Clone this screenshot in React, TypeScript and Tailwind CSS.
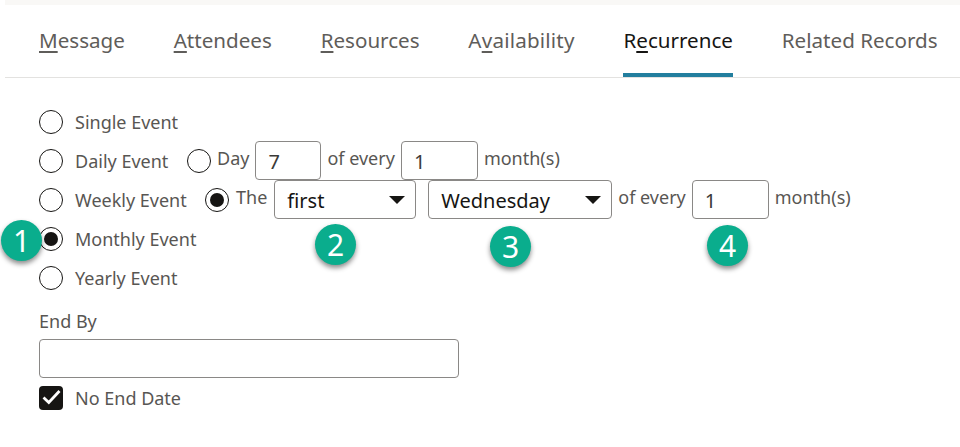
const tabs = [
    { before: '', key: 'M', after: 'essage' },
    { before: '', key: 'A', after: 'ttendees' },
    { before: '', key: 'R', after: 'esources' },
    { before: 'A', key: 'v', after: 'ailability', wide: true },
    { before: 'R', key: 'e', after: 'currence', active: true },
    { before: 'Re', key: 'l', after: 'ated Records' },
];

const Radio = ({ checked = false }: { checked?: boolean }) => (
    <span className="w-6 h-6 mt-px shrink-0 rounded-full border border-[#161513] bg-white flex items-center justify-center">
        {checked && <span className="w-[14px] h-[14px] rounded-full bg-[#161513]" />}
    </span>
);

const Label = ({ children }: { children: string }) => (
    <span className="text-[18px] leading-6 text-[#585653] whitespace-nowrap pb-[6px]">{children}</span>
);

const RowLabel = ({ children, className = '' }: { children: string; className?: string }) => (
    <span className={`mt-[2px] text-[18px] text-[#585653] whitespace-nowrap ${className}`}>{children}</span>
);

const Box = ({ value, className }: { value: string; className: string }) => (
    <input
        readOnly
        value={value}
        className={`h-[39px] shrink-0 border border-[#8a8886] rounded-[4px] bg-white pl-3 pt-[2px] text-[20px] text-[#3b3a38] outline-none ${className}`}
    />
);

const Select = ({ value, className }: { value: string; className: string }) => (
    <div className={`h-[39px] shrink-0 border border-[#8a8886] rounded-[4px] bg-white pl-3 pr-[10px] flex items-center justify-between text-[20px] text-[#161513] ${className}`}>
        <span className="pt-[2px]">{value}</span>
        <span className="w-0 h-0 border-x-[8px] border-x-transparent border-t-[8px] border-t-[#161513]" />
    </div>
);

const Badge = ({ n, className }: { n: number; className: string }) => (
    <span className={`absolute w-[41px] h-[41px] rounded-full bg-[#0aad8d] text-white text-[30px] flex items-center justify-center shadow-[0_3px_5px_rgba(0,0,0,0.45)] ${className}`}>
        {n}
    </span>
);

const App = () => {
    return (
        <div className="relative w-[960px] h-[447px] overflow-hidden bg-white font-['Noto_Sans',sans-serif]">
            <div className="ml-[5px] h-[5px] bg-[#f9f8f6]" />
            <div className="ml-[5px] h-[73px] pl-[34px] border-b border-[#e3e2e0] flex gap-[48.8px]">
                {tabs.map((t) => (
                    <div
                        key={t.key + t.after}
                        className={`h-[72px] pt-[19px] text-[20.6px] leading-8 whitespace-nowrap ${t.wide ? 'tracking-[0.2px]' : ''} ${t.active ? 'text-[#161513] border-b-4 border-[#227e9e]' : 'text-[#5f5d5a]'}`}
                    >
                        {t.before}
                        <span className="underline decoration-2 underline-offset-[3px]">{t.key}</span>
                        {t.after}
                    </div>
                ))}
            </div>

            <div className="pl-[39px] pt-[24px]">
                <div className="h-[39px] flex items-center gap-3">
                    <Radio />
                    <RowLabel>Single Event</RowLabel>
                </div>
                <div className="h-[39px] flex items-center">
                    <Radio />
                    <RowLabel className="ml-3 w-[112px]">Daily Event</RowLabel>
                    <Radio />
                    <span className="ml-[6px] mr-[6px] flex"><Label>Day</Label></span>
                    <Box value="7" className="w-[66px]" />
                    <span className="mx-[6px] flex"><Label>of every</Label></span>
                    <Box value="1" className="w-[77px]" />
                    <span className="ml-[6px] flex"><Label>month(s)</Label></span>
                </div>
                <div className="h-[39px] flex items-center">
                    <Radio />
                    <RowLabel className="ml-3 w-[130px]">Weekly Event</RowLabel>
                    <Radio checked />
                    <span className="ml-[7px] mr-[7px] flex"><Label>The</Label></span>
                    <Select value="first" className="w-[142px]" />
                    <Select value="Wednesday" className="w-[184px] ml-3" />
                    <span className="mx-[6px] flex"><Label>of every</Label></span>
                    <Box value="1" className="w-[77px]" />
                    <span className="ml-[6px] flex"><Label>month(s)</Label></span>
                </div>
                <div className="h-[39px] flex items-center gap-3">
                    <Radio checked />
                    <RowLabel>Monthly Event</RowLabel>
                </div>
                <div className="h-[39px] flex items-center gap-3">
                    <Radio />
                    <RowLabel>Yearly Event</RowLabel>
                </div>

                <div className="mt-3 mb-[6px] text-[18px] leading-6 text-[#585653]">End By</div>
                <input readOnly className="block w-[420px] h-[39px] border border-[#8a8886] rounded-[4px] bg-white outline-none" />
                <div className="mt-2 flex items-center gap-3">
                    <span className="w-6 h-6 rounded-[4px] bg-[#161513] flex items-center justify-center">
                        <svg viewBox="0 0 24 24" className="w-6 h-6" fill="none" stroke="#fff" strokeWidth="2.8">
                            <path d="M4.5 11.5 9.8 16.5 20.5 5" />
                        </svg>
                    </span>
                    <span className="text-[18px] leading-6 text-[#585653]">No End Date</span>
                </div>
            </div>

            <Badge n={1} className="left-[1px] top-[220px]" />
            <Badge n={2} className="left-[315px] top-[224px]" />
            <Badge n={3} className="left-[490px] top-[226px]" />
            <Badge n={4} className="left-[707px] top-[225px]" />
        </div>
    );
};

export default App;
